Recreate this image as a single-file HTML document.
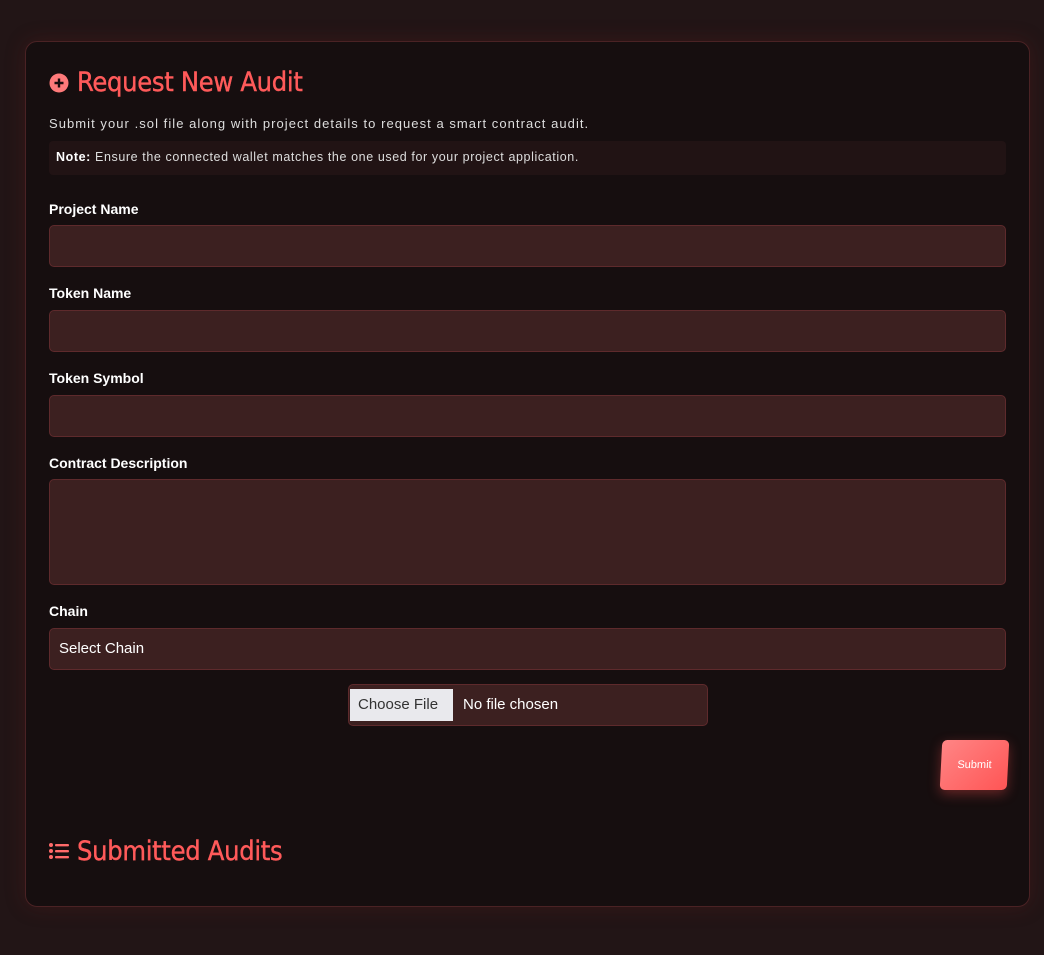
<!DOCTYPE html>
<html><head><style>
*{box-sizing:border-box;margin:0;padding:0}
body{width:1044px;height:955px;background:#221516;font-family:"Liberation Sans",sans-serif;position:relative;overflow:hidden}
.card{position:absolute;left:25px;top:41px;width:1005px;height:866px;background:#160e0f;border:1px solid #4a2224;border-radius:12px;box-shadow:0 0 20px rgba(120,30,30,.25)}
h2{position:absolute;left:77px;color:#ff5a5a;font-size:27px;font-weight:normal;font-family:"DejaVu Sans Condensed","Liberation Sans Narrow",sans-serif;letter-spacing:-.3px;-webkit-text-stroke:.4px #ff5a5a}
.t{position:absolute;color:#fff;font-size:14px;font-weight:bold}
.in{position:absolute;left:49px;width:957px;height:42px;background:#3c2020;border:1px solid #5e2a2c;border-radius:5px}
</style></head><body>
<div class="card"></div>
<svg style="position:absolute;left:49px;top:73px" width="20" height="20"><circle cx="10" cy="10" r="9.5" fill="#ff7a7a"/><path d="M10 5.5v9M5.5 10h9" stroke="#1a0d0e" stroke-width="2.4"/></svg>
<h2 style="top:67px">Request New Audit</h2>
<div style="position:absolute;left:49px;top:116px;color:#ddd;font-size:13px;letter-spacing:1.05px">Submit your .sol file along with project details to request a smart contract audit.</div>
<div style="position:absolute;left:49px;top:141px;width:957px;height:34px;background:#211314;border-radius:4px;color:#ddd;font-size:12.5px;padding:9px 7px;letter-spacing:.6px"><b style="color:#fff">Note:</b> Ensure the connected wallet matches the one used for your project application.</div>
<div class="t" style="left:49px;top:201px">Project Name</div><div class="in" style="top:225px"></div>
<div class="t" style="left:49px;top:285px">Token Name</div><div class="in" style="top:310px"></div>
<div class="t" style="left:49px;top:370px">Token Symbol</div><div class="in" style="top:395px"></div>
<div class="t" style="left:49px;top:455px">Contract Description</div><div class="in" style="top:479px;height:106px"></div>
<div class="t" style="left:49px;top:603px">Chain</div><div class="in" style="top:628px;color:#fff;font-size:15px;padding:11px 9px">Select Chain</div>
<div style="position:absolute;left:348px;top:684px;width:360px;height:42px;background:#3c2020;border:1px solid #5e2a2c;border-radius:5px">
<div style="position:absolute;left:1px;top:4px;width:103px;height:32px;background:#e9e9ed;color:#333;font-size:15px;padding:7px 8px">Choose File</div>
<div style="position:absolute;left:114px;top:11px;color:#fff;font-size:15px">No file chosen</div></div>
<div style="position:absolute;left:941px;top:740px;width:67px;height:50px;background:linear-gradient(135deg,#ff8585,#ff5555);border-radius:5px;transform:skewX(-3deg);box-shadow:0 4px 12px rgba(255,80,80,.35);color:#fff;font-size:11px;text-align:center;line-height:50px">Submit</div>
<svg style="position:absolute;left:49px;top:842px" width="20" height="18" fill="#ff6a6a"><circle cx="2" cy="3" r="2"/><circle cx="2" cy="9" r="2"/><circle cx="2" cy="15" r="2"/><rect x="6" y="2" width="14" height="2.4" rx="1"/><rect x="6" y="8" width="14" height="2.4" rx="1"/><rect x="6" y="14" width="14" height="2.4" rx="1"/></svg>
<h2 style="top:836px">Submitted Audits</h2>
</body></html>
